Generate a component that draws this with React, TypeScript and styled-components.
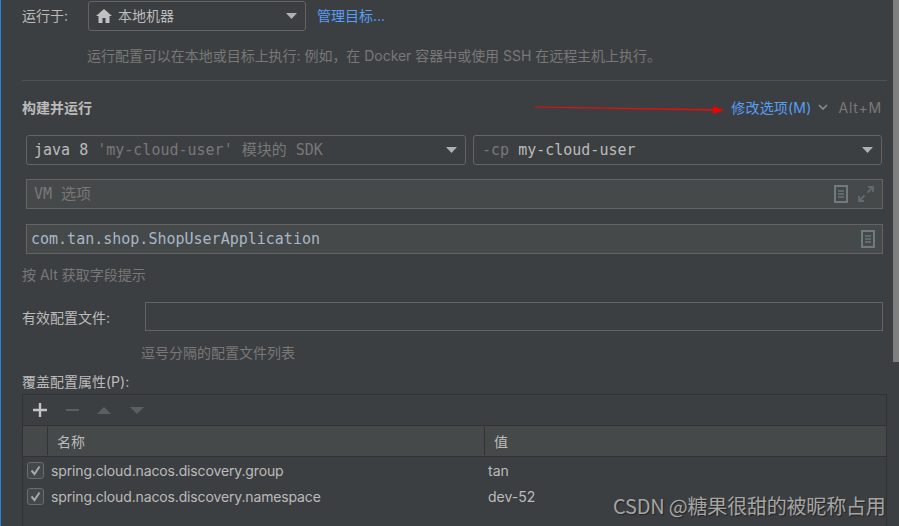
import React from "react";
import styled, { createGlobalStyle } from "styled-components";

const Global = createGlobalStyle`
  html, body { margin: 0; padding: 0; background: #3c3f41; }
  * { box-sizing: border-box; }
`;

const UI = `"Inter", "Noto Sans CJK SC", sans-serif`;
const MONO = `"DejaVu Sans Mono", "Noto Sans CJK SC", monospace`;

const Page = styled.div`
  position: relative;
  width: 899px;
  height: 526px;
  overflow: hidden;
  display: flex;
  align-items: flex-start;
  background: #3c3f41;
  border-left: 1px solid #2f80d8;
  font-family: ${UI};
  font-size: 14px;
  color: #bbbbbb;
`;
const Content = styled.div`
  width: 892px;
  padding: 1px 6px 0 21px;
  display: flex;
  flex-direction: column;
  flex: none;
`;
const Thumb = styled.div`
  width: 6px;
  height: 362px;
  background: #7f7f7f;
  flex: none;
`;
const Row = styled.div`
  display: flex;
  align-items: center;
  height: 30px;
`;
const RunLabel = styled.span`
  width: 66px;
  flex: none;
  padding-bottom: 2px;
`;
const Combo = styled.div<{ $w: number; $gap?: number; $pad?: number }>`
  width: ${(p) => p.$w}px;
  height: 30px;
  flex: none;
  display: flex;
  align-items: center;
  gap: ${(p) => p.$gap ?? 8}px;
  padding: 0 8px 0 ${(p) => p.$pad ?? 7}px;
  border: 1px solid #646464;
  border-radius: 3px;
  background: #3c3f41;
`;
const Grow = styled.span<{ $lift?: number }>`
  flex: 1;
  display: block;
  line-height: 20px;
  white-space: pre;
  padding-bottom: ${(p) => p.$lift ?? 0}px;
`;
const Link = styled.span`
  color: #589df6;
`;
const ManageLink = styled(Link)`
  margin-left: 11px;
  padding-bottom: 2px;
`;
const Hint = styled.div<{ $top: number; $left?: number; $tight?: boolean }>`
  height: 18px;
  line-height: 18px;
  margin-top: ${(p) => p.$top}px;
  margin-left: ${(p) => p.$left ?? 0}px;
  color: #787878;
  white-space: pre;
  letter-spacing: ${(p) => (p.$tight ? "-0.03px" : "0")};
`;
const Separator = styled.div`
  height: 1px;
  margin-top: 15px;
  background: #515151;
`;
const SectionHead = styled.div`
  height: 20px;
  margin-top: 16px;
  display: flex;
  align-items: center;
`;
const SectionTitle = styled.span`
  flex: 1;
  font-weight: 700;
`;
const Shortcut = styled.span`
  color: #787878;
  margin: 0 5px 0 11px;
  letter-spacing: 0.8px;
`;
const Options = styled(Link)`
  margin-right: 6px;
  letter-spacing: 0.2px;
`;
const ComboRow = styled.div`
  display: flex;
  gap: 7px;
  margin: 18px 0 0 4px;
  font-family: ${MONO};
  font-size: 15px;
`;
const Mono = styled.span<{ $muted?: boolean }>`
  color: ${(p) => (p.$muted ? "#787878" : "#bbbbbb")};
`;
const Field = styled.div<{ $top: number; $muted?: boolean; $pad: number; $right: number }>`
  height: 30px;
  margin: ${(p) => p.$top}px 4px 0 4px;
  padding: 0 ${(p) => p.$right}px 0 ${(p) => p.$pad}px;
  display: flex;
  align-items: center;
  gap: 10px;
  background: #45494a;
  border: 1px solid #646464;
  font-family: ${MONO};
  font-size: 15px;
  color: ${(p) => (p.$muted ? "#787878" : "#a9b7c6")};
`;
const ProfileRow = styled.div`
  display: flex;
  align-items: center;
  margin: 18px 4px 0 0;
  height: 29px;
`;
const ProfileLabel = styled.span`
  width: 123px;
  flex: none;
`;
const ProfileInput = styled.div`
  flex: 1;
  height: 29px;
  background: #3c3f41;
  border: 1px solid #646464;
`;
const PropsLabel = styled.div`
  height: 18px;
  line-height: 18px;
  margin-top: 11px;
  margin-bottom: 3px;
`;
const Table = styled.div`
  height: 140px;
  border: 1px solid #323232;
  border-bottom: none;
`;
const Toolbar = styled.div`
  height: 31px;
  display: flex;
  align-items: center;
  padding-left: 10px;
  border-bottom: 1px solid #323232;
`;
const ToolIcon = styled.svg<{ $left?: number }>`
  flex: none;
  margin-left: ${(p) => p.$left ?? 0}px;
`;
const Header = styled.div`
  height: 31px;
  display: grid;
  grid-template-columns: 24px 437px 1fr;
  background: #45494a;
  border-bottom: 1px solid #323232;
`;
const HeadCell = styled.div<{ $pad: number; $divider?: boolean }>`
  display: flex;
  align-items: center;
  margin: 1px 0;
  padding-left: ${(p) => p.$pad}px;
  border-left: ${(p) => (p.$divider ? "1px solid #323232" : "none")};
`;
const DataRow = styled.div`
  height: 26px;
  display: grid;
  grid-template-columns: 24px 437px 1fr;
  align-items: center;
  color: #bbbbbb;
`;
const CheckCell = styled.div`
  display: flex;
  padding-left: 4px;
`;
const Check = styled.div`
  width: 17px;
  height: 17px;
  display: flex;
  align-items: center;
  justify-content: center;
  border: 1px solid #6b6b6b;
  border-radius: 3px;
  background: #43494a;
`;
const NameCell = styled.div`
  padding-left: 4px;
  letter-spacing: -0.14px;
`;
const ValueCell = styled.div`
  padding-left: 4px;
`;
const Watermark = styled.div`
  position: absolute;
  left: 612px;
  top: 492px;
  font-family: "Noto Sans CJK SC", sans-serif;
  font-size: 20px;
  line-height: 28px;
  letter-spacing: -0.2px;
  color: #a5a5a5;
  text-shadow: 1px 1px 1px #222;
  white-space: pre;
`;
const ArrowOverlay = styled.svg`
  position: absolute;
  left: 530px;
  top: 100px;
`;

const Caret = () => (
  <svg width="11" height="6" viewBox="0 0 11 6">
    <path d="M0 0h11L5.500 6z" fill="#afb1b3" />
  </svg>
);
const Doc = () => (
  <svg width="14" height="18" viewBox="0 0 14 18" fill="none">
    <rect x="1" y="1" width="12" height="16" stroke="#6f7b7d" strokeWidth="2" />
    <path d="M4 6h6M4 9h6M4 12h6" stroke="#7f8a8c" />
  </svg>
);
const Expand = () => (
  <svg width="16" height="16" viewBox="0 0 16 16" fill="none" stroke="#5f6b70" strokeWidth="1.8">
    <path d="M9.500 6.500 15 1M10 1h5v5M6.500 9.500 1 15M1 10v5h5" />
  </svg>
);
const Home = () => (
  <svg width="16" height="14" viewBox="0 0 16 14">
    <path d="M8 0 0 7h2.500v7h4V9h3v5h4V7H16z" fill="#c0c0c0" />
  </svg>
);
const Tick = () => (
  <svg width="11" height="11" viewBox="0 0 11 11" fill="none">
    <path d="M1.500 5.500 4.500 9 9.500 1.500" stroke="#a8a8a8" strokeWidth="2" />
  </svg>
);

const props = [
  ["spring.cloud.nacos.discovery.group", "tan"],
  ["spring.cloud.nacos.discovery.namespace", "dev-52"],
];

export default function App() {
  return (
    <Page>
      <Global />
      <Content>
        <Row>
          <RunLabel>运行于:</RunLabel>
          <Combo $w={218} $gap={6}>
            <Home />
            <Grow>本地机器</Grow>
            <Caret />
          </Combo>
          <ManageLink>管理目标...</ManageLink>
        </Row>
        <Hint $top={16} $left={65} $tight>运行配置可以在本地或目标上执行: 例如，在 Docker 容器中或使用 SSH 在远程主机上执行。</Hint>
        <Separator />
        <SectionHead>
          <SectionTitle>构建并运行</SectionTitle>
          <Options>修改选项(M)</Options>
          <svg width="10" height="6" viewBox="0 0 10 6" fill="none">
            <path d="M1 1l4 4 4-4" stroke="#8c8c8c" strokeWidth="1.6" />
          </svg>
          <Shortcut>Alt+M</Shortcut>
        </SectionHead>
        <ComboRow>
          <Combo $w={440}>
            <Grow $lift={1}>
              <Mono>java 8 </Mono>
              <Mono $muted>'my-cloud-user' 模块的 SDK</Mono>
            </Grow>
            <Caret />
          </Combo>
          <Combo $w={409} $pad={8}>
            <Grow $lift={1}>
              <Mono $muted>-cp </Mono>
              <Mono>my-cloud-user</Mono>
            </Grow>
            <Caret />
          </Combo>
        </ComboRow>
        <Field $top={14} $muted $pad={7} $right={8}>
          <Grow>VM 选项</Grow>
          <Doc />
          <Expand />
        </Field>
        <Field $top={15} $pad={4} $right={7}>
          <Grow>com.tan.shop.ShopUserApplication</Grow>
          <Doc />
        </Field>
        <Hint $top={12}>按 Alt 获取字段提示</Hint>
        <ProfileRow>
          <ProfileLabel>有效配置文件:</ProfileLabel>
          <ProfileInput />
        </ProfileRow>
        <Hint $top={13} $left={119}>逗号分隔的配置文件列表</Hint>
        <PropsLabel>覆盖配置属性(P):</PropsLabel>
        <Table>
          <Toolbar>
            <ToolIcon width="14" height="14" viewBox="0 0 14 14">
              <path d="M5.800 0h2.400v5.800H14v2.400H8.200V14H5.800V8.200H0V5.800h5.800z" fill="#c4c4c4" />
            </ToolIcon>
            <ToolIcon width="13" height="14" viewBox="0 0 13 14" $left={19}>
              <rect x="0" y="6" width="13" height="2" fill="#5c5f61" />
            </ToolIcon>
            <ToolIcon width="16" height="9" viewBox="0 0 16 9" $left={17}>
              <path d="M8 1l7 7H1z" fill="#5c5f61" />
            </ToolIcon>
            <ToolIcon width="16" height="9" viewBox="0 0 16 9" $left={17}>
              <path d="M1 1h14L8 8z" fill="#5c5f61" />
            </ToolIcon>
          </Toolbar>
          <Header>
            <HeadCell $pad={0} />
            <HeadCell $pad={9} $divider>名称</HeadCell>
            <HeadCell $pad={9} $divider>值</HeadCell>
          </Header>
          {props.map(([name, value]) => (
            <DataRow key={name}>
              <CheckCell>
                <Check>
                  <Tick />
                </Check>
              </CheckCell>
              <NameCell>{name}</NameCell>
              <ValueCell>{value}</ValueCell>
            </DataRow>
          ))}
        </Table>
      </Content>
      <Thumb />
      <ArrowOverlay width="200" height="20" viewBox="0 0 200 20">
        <path d="M4 6.500 182 9V10.800L4 7.500z" fill="#e01010" />
        <path d="M182 6 193 10.300 182 14z" fill="#f00000" />
      </ArrowOverlay>
      <Watermark>CSDN @糖果很甜的被昵称占用</Watermark>
    </Page>
  );
}
